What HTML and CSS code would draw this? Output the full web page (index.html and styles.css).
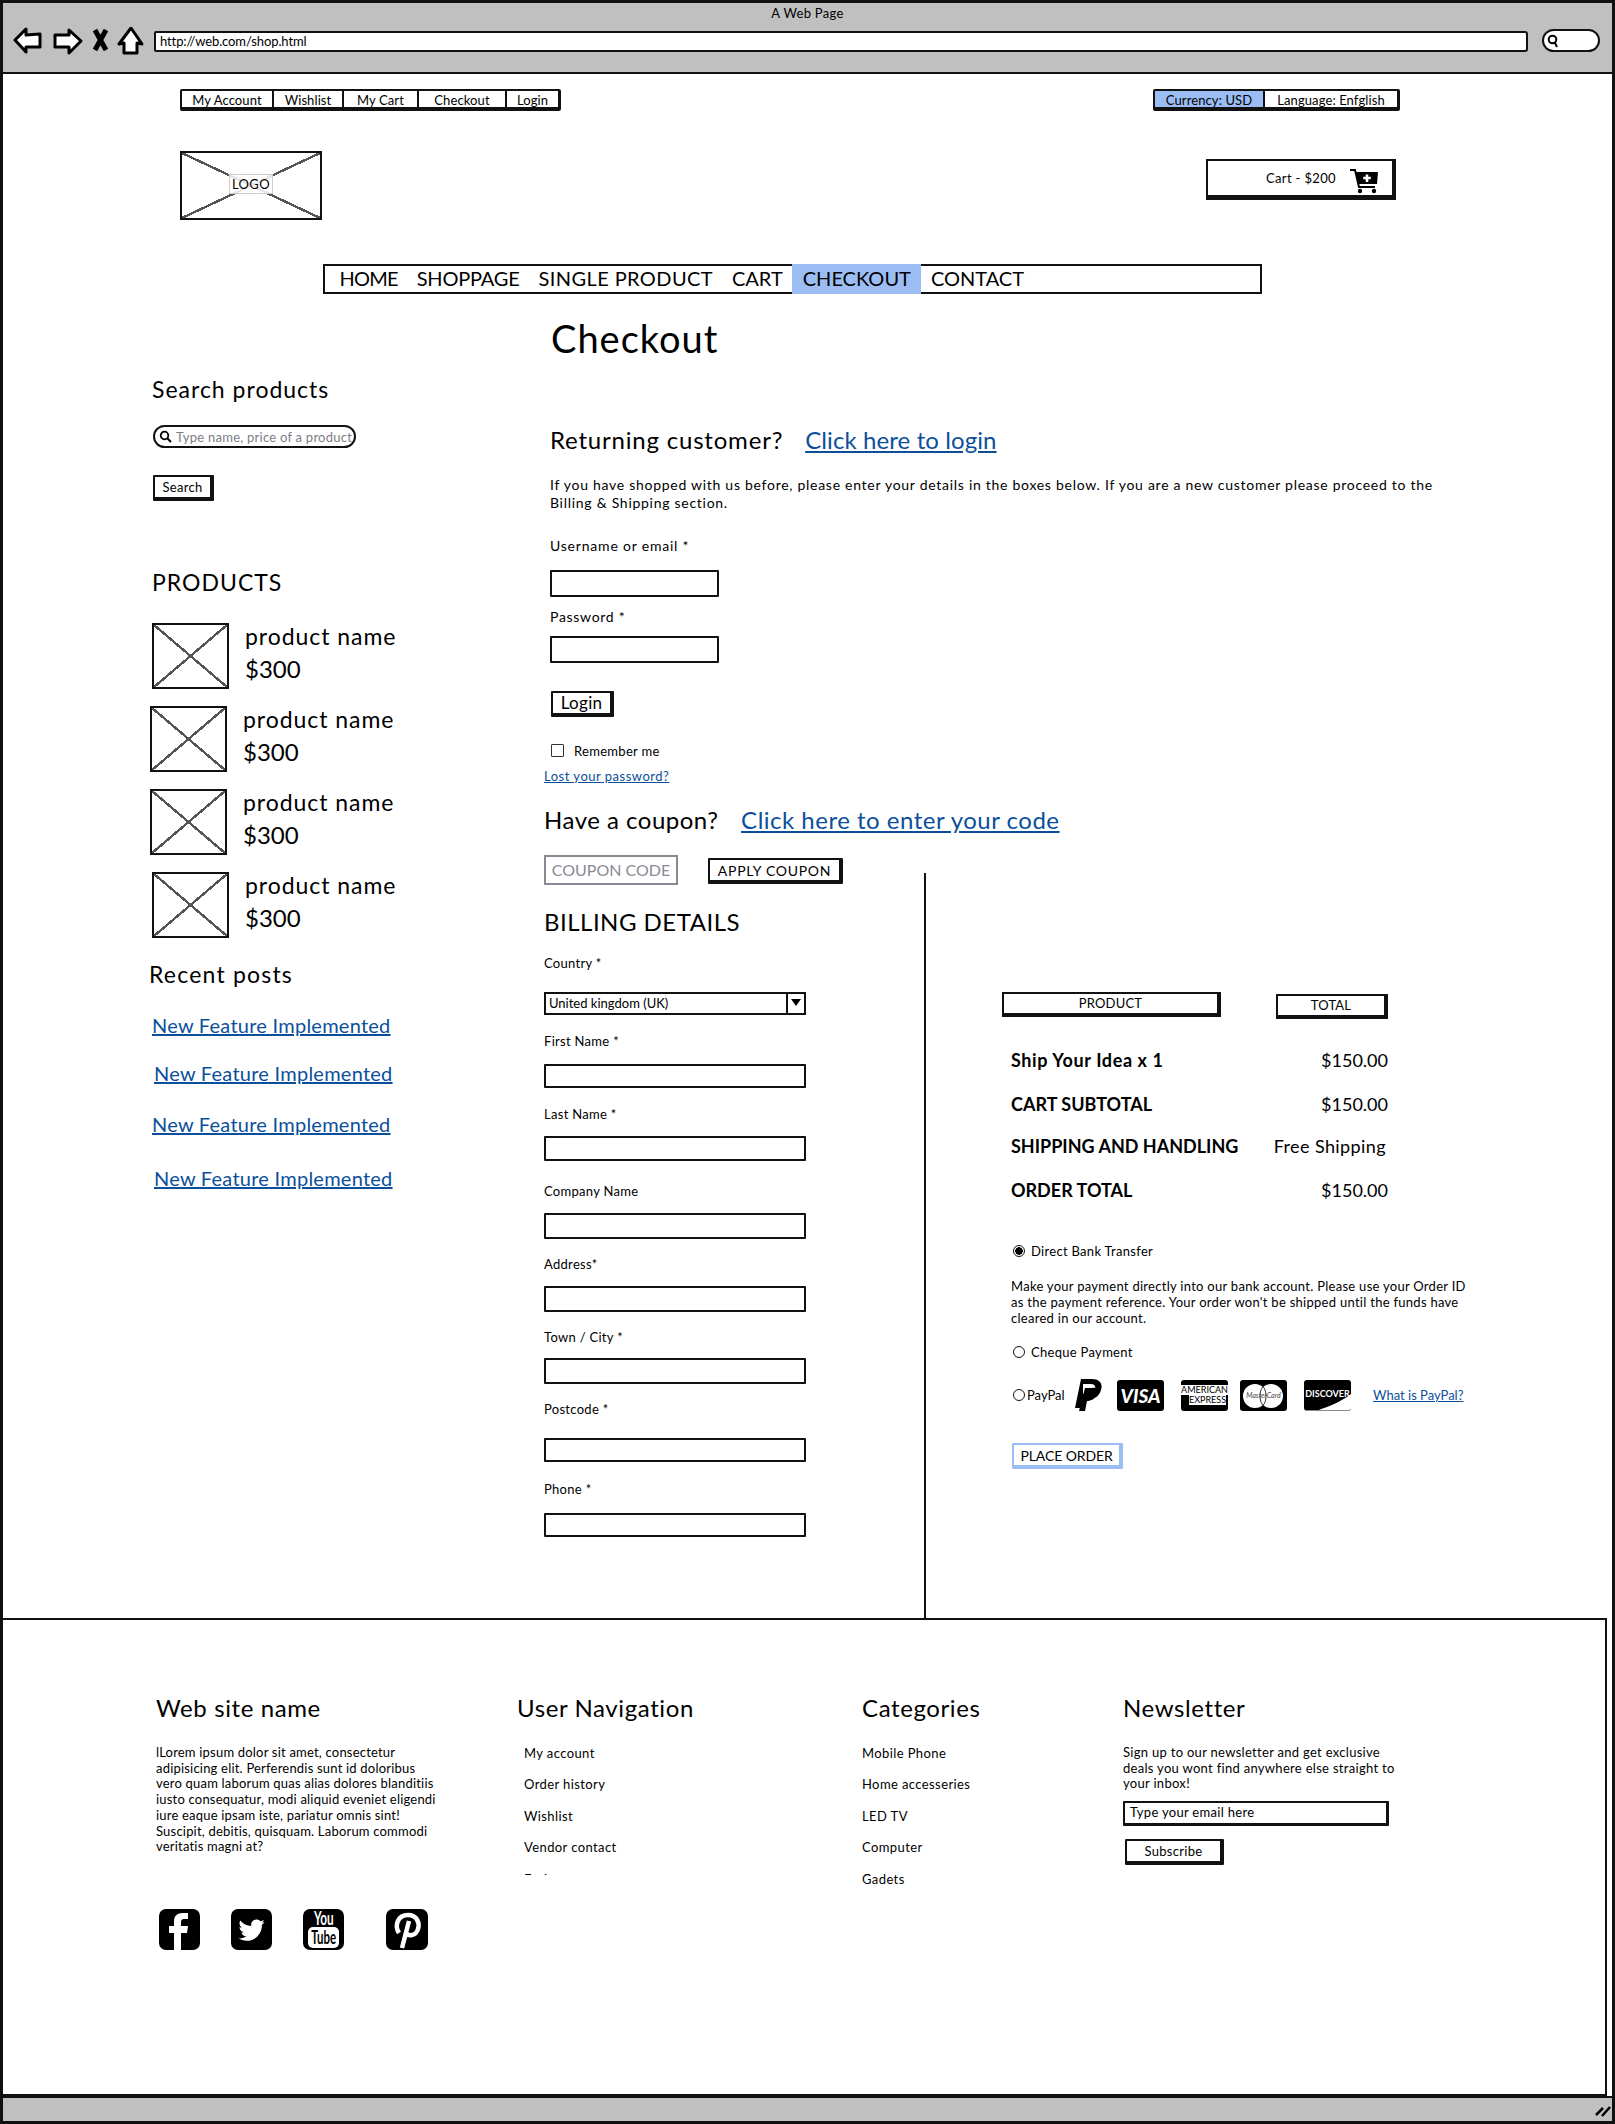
FILE: index.html
```html
<!DOCTYPE html>
<html>
<head>
  <title>A Web Page</title>
  <link rel="stylesheet" href="styles.css">
</head>
<body>
  <div class="window">
    <div class="chrome">
      <div class="chrome-title">A Web Page</div>
      <div class="chrome-row">
        <svg class="chrome-icons" width="132" height="28" viewBox="0 0 132 28">
          <path d="M3 13 L14 2 L14 8 L28 7 L28 20 L14 20 L14 25 Z" fill="#fff" stroke="#000" stroke-width="3" stroke-linejoin="round"/>
          <path d="M69 14 L57 3 L57 8 L43 8 L43 20 L57 20 L57 26 Z" fill="#fff" stroke="#000" stroke-width="3" stroke-linejoin="round"/>
          <path d="M83 3 L94 23 M94 3 L83 23" stroke="#000" stroke-width="5" fill="none"/>
          <path d="M119 1 L107 17 L112 16 L112 26 L125 26 L125 16 L130 17 Z" fill="#fff" stroke="#000" stroke-width="3" stroke-linejoin="round"/>
        </svg>
        <div class="address">http://web.com/shop.html</div>
        <div class="chrome-search">
          <svg width="12" height="14" viewBox="0 0 12 14"><circle cx="5.500" cy="5.500" r="3.800" fill="none" stroke="#000" stroke-width="2"/><path d="M8 9 L10 13" stroke="#000" stroke-width="2"/></svg>
        </div>
      </div>
    </div>

    <div class="topbar">
      <div class="tabs">
        <a class="tab tab-account">My Account</a>
        <a class="tab tab-wishlist">Wishlist</a>
        <a class="tab tab-cart">My Cart</a>
        <a class="tab tab-checkout">Checkout</a>
        <a class="tab tab-login">Login</a>
      </div>
      <div class="tabs">
        <a class="tab tab-currency">Currency: USD</a>
        <a class="tab tab-language">Language: Enfglish</a>
      </div>
    </div>

    <div class="brand-row">
      <div class="placeholder logo"><span class="logo-label">LOGO</span></div>
      <div class="cart-box">
        <span>Cart - $200</span>
        <svg width="30" height="26" viewBox="0 0 30 26">
          <path d="M1 2 L6 2 L10 19 L26 19" fill="none" stroke="#000" stroke-width="2"/>
          <path d="M7 4 L29 4 L28 16 L9 16 Z" fill="#000"/>
          <path d="M18 6.500 V14 M14.200 10 H21.800" stroke="#fff" stroke-width="2.600"/>
          <circle cx="11" cy="23" r="2.200"/><circle cx="25" cy="23" r="2.200"/>
        </svg>
      </div>
    </div>

    <div class="mainnav">
      <a class="nav-item nav-home">HOME</a>
      <a class="nav-item nav-shop">SHOPPAGE</a>
      <a class="nav-item nav-single">SINGLE PRODUCT</a>
      <a class="nav-item">CART</a>
      <a class="nav-item active">CHECKOUT</a>
      <a class="nav-item">CONTACT</a>
    </div>

    <div class="main">
      <aside class="sidebar">
        <h3 class="side-title search-title">Search products</h3>
        <div class="search-pill">
          <svg width="13" height="13" viewBox="0 0 13 13"><circle cx="5.500" cy="5.500" r="3.800" fill="none" stroke="#000" stroke-width="1.800"/><path d="M8.300 8.300 L12 12" stroke="#000" stroke-width="2"/></svg>
          <span>Type name, price of a product</span>
        </div>
        <button class="btn btn-search">Search</button>

        <h3 class="side-title products-title">PRODUCTS</h3>
        <div class="product">
          <div class="placeholder thumb"></div>
          <div><div class="product-name">product name</div><div class="product-price">$300</div></div>
        </div>
        <div class="product shifted">
          <div class="placeholder thumb"></div>
          <div><div class="product-name">product name</div><div class="product-price">$300</div></div>
        </div>
        <div class="product shifted">
          <div class="placeholder thumb"></div>
          <div><div class="product-name">product name</div><div class="product-price">$300</div></div>
        </div>
        <div class="product">
          <div class="placeholder thumb"></div>
          <div><div class="product-name">product name</div><div class="product-price">$300</div></div>
        </div>

        <h3 class="side-title recent-title">Recent posts</h3>
        <a class="post post-1">New Feature Implemented</a>
        <a class="post post-2">New Feature Implemented</a>
        <a class="post post-3">New Feature Implemented</a>
        <a class="post post-4">New Feature Implemented</a>
      </aside>

      <div class="content">
        <h1>Checkout</h1>

        <div class="login-block">
          <h2 class="line-title">Returning customer? <a class="big-link login-link">Click here to login</a></h2>
          <p class="intro">If you have shopped with us before, please enter your details in the boxes below. If you are a new customer please proceed to the Billing &amp; Shipping section.</p>
          <div class="label label-user">Username or email *</div>
          <div class="field field-short input-user"></div>
          <div class="label label-pass">Password *</div>
          <div class="field field-short input-pass"></div>
          <button class="btn btn-login">Login</button>
          <div class="remember"><span class="checkbox"></span>Remember me</div>
        </div>

        <a class="lost">Lost your password?</a>
        <h2 class="line-title coupon-title">Have a coupon? <a class="big-link">Click here to enter your code</a></h2>
        <div class="coupon-row">
          <div class="coupon-box">COUPON CODE</div>
          <button class="btn btn-apply">APPLY COUPON</button>
        </div>

        <div class="checkout-grid">
          <div class="billing">
            <h2 class="billing-title">BILLING DETAILS</h2>
            <div class="label f-country">Country *</div>
            <div class="select"><span>United kingdom (UK)</span><b class="select-arrow"></b></div>
            <div class="label f-first">First Name *</div>
            <div class="field field-wide i-first"></div>
            <div class="label f-last">Last Name *</div>
            <div class="field field-wide i-last"></div>
            <div class="label f-company">Company Name</div>
            <div class="field field-wide i-company"></div>
            <div class="label f-address">Address*</div>
            <div class="field field-wide i-address"></div>
            <div class="label f-town">Town / City *</div>
            <div class="field field-wide i-town"></div>
            <div class="label f-post">Postcode *</div>
            <div class="field field-wide i-post"></div>
            <div class="label f-phone">Phone *</div>
            <div class="field field-wide i-phone"></div>
          </div>

          <div class="order">
            <div class="order-head">
              <div class="head-cell head-product">PRODUCT</div>
              <div class="head-cell head-total">TOTAL</div>
            </div>
            <div class="order-row row-1"><b>Ship Your Idea x 1</b><span>$150.00</span></div>
            <div class="order-row row-2 caps"><b>CART SUBTOTAL</b><span>$150.00</span></div>
            <div class="order-row row-3 caps"><b>SHIPPING AND HANDLING</b><span class="free">Free Shipping</span></div>
            <div class="order-row row-4 caps"><b>ORDER TOTAL</b><span>$150.00</span></div>

            <div class="pay-option pay-bank"><span class="radio on"></span>Direct Bank Transfer</div>
            <p class="pay-note">Make your payment directly into our bank account. Please use your Order ID as the payment reference. Your order won't be shipped until the funds have cleared in our account.</p>
            <div class="pay-option pay-cheque"><span class="radio"></span>Cheque Payment</div>
            <div class="pay-cards">
              <span class="radio"></span><span class="paypal-label">PayPal</span>
              <svg class="pp" width="27" height="32" viewBox="0 0 27 32">
                <path d="M6 0 H17 C25 0 28 5 26 11 C24 18 19 20 13 20 H10 L8 29 H0 Z" fill="#000"/>
                <path d="M8 5 H16 C20 5 21 8 20 11 C19 14 16 15 12 15 H8 Z" fill="#fff"/>
                <path d="M10 9 H17 C23 8 24 11 22 15 C20 20 16 22 12 22 L10 32 H4 Z" fill="#000"/>
              </svg>
              <div class="card visa">VISA</div>
              <div class="card amex"><span>AMERICAN</span><span>EXPRESS</span></div>
              <div class="card mc">
                <svg width="42" height="26" viewBox="0 0 42 26"><circle cx="13" cy="13" r="12" fill="#fff"/><circle cx="29" cy="13" r="12" fill="#fff"/><path d="M21 3.500 C17 8 17 18 21 22.500 C25 18 25 8 21 3.500 Z" fill="#fff" stroke="#000" stroke-width="0.800"/></svg>
                <span>MasterCard</span>
              </div>
              <div class="card discover">
                <svg width="47" height="31" viewBox="0 0 47 31"><path d="M47 14 C34 24 20 28 12 31 H47 Z" fill="#fff"/></svg>
                <span>DISCOVER</span>
              </div>
              <a class="whatis">What is PayPal?</a>
            </div>
            <button class="btn btn-place">PLACE ORDER</button>
          </div>
        </div>
      </div>
    </div>

    <div class="footer">
      <div class="foot-col">
        <h3 class="foot-title">Web site name</h3>
        <p class="foot-text about">lLorem ipsum dolor sit amet, consectetur adipisicing elit. Perferendis sunt id doloribus vero quam laborum quas alias dolores blanditiis iusto consequatur, modi aliquid eveniet eligendi iure eaque ipsam iste, pariatur omnis sint! Suscipit, debitis, quisquam. Laborum commodi veritatis magni at?</p>
        <div class="social">
          <svg width="41" height="41" viewBox="0 0 41 41"><rect width="41" height="41" rx="7"/><path d="M22 41 V24 H28 L29 17 H22 V13 C22 11 23 10 25 10 H29 V4 H24 C18 4 15 7 15 12 V17 H10 V24 H15 V41 Z" fill="#fff"/></svg>
          <svg width="41" height="41" viewBox="0 0 41 41"><rect width="41" height="41" rx="7"/><g transform="translate(5.500 5.500) scale(1.250)"><path fill="#fff" d="M22.460,6C21.690,6.350 20.860,6.580 20,6.690C20.880,6.160 21.560,5.320 21.880,4.310C21.050,4.810 20.130,5.160 19.160,5.360C18.370,4.500 17.260,4 16,4C13.650,4 11.730,5.920 11.730,8.290C11.730,8.630 11.770,8.960 11.840,9.270C8.280,9.090 5.110,7.380 3,4.790C2.630,5.420 2.420,6.160 2.420,6.940C2.420,8.430 3.170,9.750 4.330,10.500C3.620,10.500 2.960,10.300 2.380,10C2.380,10 2.380,10 2.380,10.030C2.380,12.110 3.860,13.850 5.820,14.240C5.460,14.340 5.080,14.390 4.690,14.390C4.420,14.390 4.150,14.360 3.890,14.310C4.430,16 6,17.260 7.890,17.290C6.430,18.450 4.580,19.130 2.560,19.130C2.220,19.130 1.880,19.110 1.540,19.070C3.440,20.290 5.700,21 8.120,21C16,21 20.330,14.460 20.330,8.790C20.330,8.600 20.330,8.420 20.320,8.230C21.160,7.630 21.880,6.870 22.460,6Z"/></g></svg>
          <div class="yt"><span class="yt-you">You</span><span class="yt-box"><span class="yt-tube">Tube</span></span></div>
          <svg width="42" height="41" viewBox="0 0 42 41"><rect width="42" height="41" rx="7"/><path d="M13 24 C8 16 12 6 22 6 C31 6 34 14 32 20 C30 27 22 28 19 23 M23 12 L16 39" fill="none" stroke="#fff" stroke-width="4.500"/></svg>
        </div>
      </div>
      <div class="foot-col">
        <h3 class="foot-title">User Navigation</h3>
        <ul class="foot-list clipped">
          <li>My account</li><li>Order history</li><li>Wishlist</li><li>Vendor contact</li><li>Fruits</li>
        </ul>
      </div>
      <div class="foot-col">
        <h3 class="foot-title">Categories</h3>
        <ul class="foot-list cats">
          <li>Mobile Phone</li><li>Home accesseries</li><li>LED TV</li><li>Computer</li><li>Gadets</li>
        </ul>
      </div>
      <div class="foot-col">
        <h3 class="foot-title">Newsletter</h3>
        <p class="foot-text news">Sign up to our newsletter and get exclusive deals you wont find anywhere else straight to your inbox!</p>
        <div class="field email">Type your email here</div>
        <button class="btn btn-subscribe">Subscribe</button>
      </div>
    </div>

    <div class="statusbar">
      <svg width="16" height="14" viewBox="0 0 16 14"><path d="M1 12 L8 5 M7 13 L15 4" stroke="#000" stroke-width="2.500"/></svg>
    </div>
  </div>
</body>
</html>
```

FILE: styles.css
```css
* { box-sizing: border-box; }
html, body { margin: 0; padding: 0; }
body {
  width: 1615px;
  height: 2124px;
  background: white;
  color: #000;
  font-family: Lato, "Open Sans", sans-serif;
  font-size: 14px;
  overflow: hidden;
}
h1, h2, h3, p, ul { margin: 0; padding: 0; font-weight: normal; }
ul { list-style: none; }
a { color: inherit; }
button { font-family: inherit; color: #000; background: white; padding: 0; cursor: pointer; }

.window {
  width: 1615px;
  height: 2124px;
  border: 3px solid #111;
  display: flex;
  flex-direction: column;
}

/* browser chrome */
.chrome {
  height: 71px;
  flex: none;
  background: #c0c0c0;
  border-bottom: 2px solid #111;
}
.chrome-title {
  text-align: center;
  font-size: 13px;
  line-height: 14px;
  padding-top: 3px;
  letter-spacing: 0.3px;
}
.chrome-row {
  display: flex;
  align-items: flex-start;
  margin-top: 4px;
  padding-left: 9px;
}
.chrome-icons { flex: none; margin-top: 3px; margin-right: 10px; }
.address {
  width: 1374px;
  height: 21px;
  margin-top: 7px;
  background: white;
  border: 2px solid #111;
  border-radius: 2px 3px 3px 2px;
  font-size: 13px;
  line-height: 17px;
  padding-left: 4px;
  letter-spacing: -0.1px;
}
.chrome-search {
  width: 58px;
  height: 23px;
  margin-left: 14px;
  margin-top: 5px;
  background: white;
  border: 2px solid #111;
  border-radius: 12px;
  padding: 3px 0 0 3px;
}

/* top tabs */
.topbar {
  display: flex;
  justify-content: space-between;
  margin-top: 15px;
  padding: 0 212px 0 177px;
}
.tabs {
  display: flex;
  height: 22px;
  border: 2px solid #111;
  border-bottom-width: 4px;
  border-right-width: 3px;
  border-radius: 2px;
}
.tab {
  display: block;
  font-size: 13px;
  line-height: 18px;
  text-align: center;
  border-right: 2px solid #111;
  letter-spacing: 0.1px;
}
.tab:last-child { border-right: none; }
.tab-account { width: 92px; }
.tab-wishlist { width: 70px; }
.tab-cart { width: 75px; }
.tab-checkout { width: 88px; }
.tab-login { width: 51px; }
.tab-currency { width: 110px; background: #9bbdf3; }
.tab-language { width: 132px; }

/* logo row */
.brand-row {
  display: flex;
  justify-content: space-between;
  align-items: flex-start;
  margin-top: 40px;
  padding: 0 216px 0 177px;
}
.placeholder {
  border: 2px solid #111;
  background:
    linear-gradient(to top right, transparent calc(50% - 1.2px), #555 calc(50% - 1.2px), #555 calc(50% + 1.2px), transparent calc(50% + 1.2px)),
    linear-gradient(to bottom right, transparent calc(50% - 1.2px), #555 calc(50% - 1.2px), #555 calc(50% + 1.2px), transparent calc(50% + 1.2px)),
    white;
}
.logo {
  width: 142px;
  height: 69px;
  display: flex;
  align-items: center;
  justify-content: center;
}
.logo-label {
  font-size: 13px;
  line-height: 18px;
  padding: 0 2px;
  margin-bottom: 3px;
  letter-spacing: 0.4px;
  background: rgba(255,255,255,0.85);
  border: 1px solid #ccc;
}
.cart-box {
  width: 190px;
  height: 41px;
  margin-top: 8px;
  border: 2px solid #111;
  border-bottom-width: 5px;
  border-right-width: 4px;
  display: flex;
  justify-content: flex-end;
  font-size: 13px;
  line-height: 16px;
  padding: 9px 13px 0 0;
  letter-spacing: 0.35px;
}
.cart-box svg { margin: -2px 0 0 13px; }

/* main nav */
.mainnav {
  display: flex;
  width: 939px;
  height: 30px;
  margin: 44px 0 0 320px;
  padding-left: 5px;
  border: 2px solid #111;
  font-size: 20px;
  line-height: 25px;
}
.nav-item { display: block; padding: 0 9.500px; }
.nav-home { letter-spacing: -0.8px; }
.nav-shop { letter-spacing: -0.2px; }
.nav-single { letter-spacing: 0.4px; }
.nav-item.active { background: #9bbdf3; height: 30px; margin-top: -2px; padding: 2px 10.500px 0; }

/* layout */
.main {
  display: flex;
  height: 1324px;
  flex: none;
  padding-left: 146px;
}
.sidebar { width: 395px; flex: none; }
.content { width: 1071px; flex: none; }

/* sidebar */
.side-title { font-size: 23px; line-height: 30px; letter-spacing: 1px; }
.search-title { margin: 80px 0 0 3px; }
.search-pill {
  display: flex;
  align-items: center;
  gap: 4px;
  width: 203px;
  height: 23px;
  margin: 21px 0 0 4px;
  padding-left: 4px;
  border: 2px solid #111;
  border-radius: 12px;
  font-size: 13px;
  color: #7d7d86;
  white-space: nowrap;
  letter-spacing: 0.25px;
}
.btn {
  display: block;
  border: 2px solid #111;
  border-bottom-width: 4px;
  border-right-width: 4px;
  border-radius: 1px;
  font-size: 13px;
  letter-spacing: 0.3px;
}
.btn-search { width: 61px; height: 26px; margin: 27px 0 0 4px; }
.products-title { margin: 66px 0 0 3px; }
.product {
  display: flex;
  gap: 16px;
  margin: 17px 0 0 3px;
}
.products-title + .product { margin-top: 26px; }
.product.shifted { margin-left: 1px; }
.thumb { width: 77px; height: 66px; flex: none; }
.product-name { font-size: 23px; line-height: 30px; margin-top: -2px; letter-spacing: 0.95px; }
.product-price { font-size: 24px; line-height: 30px; margin-top: 3px; }
.recent-title { margin: 21px 0 0; letter-spacing: 1.2px; }
.post {
  display: block;
  width: max-content;
  color: #0b4f9c;
  font-size: 20px;
  line-height: 26px;
  letter-spacing: 0.25px;
  text-decoration: underline;
}
.post-1 { margin: 23px 0 0 3px; }
.post-2 { margin: 22px 0 0 5px; }
.post-3 { margin: 25px 0 0 3px; }
.post-4 { margin: 28px 0 0 5px; }

/* login part */
h1 { font-size: 38px; line-height: 46px; margin: 21px 0 0 7px; letter-spacing: 1px; }
.login-block { margin-left: 6px; }
.line-title { font-size: 24px; line-height: 30px; letter-spacing: 0.5px; }
.big-link { color: #0b4f9c; text-decoration: underline; margin-left: 16px; }
.login-block .line-title { margin-top: 64px; letter-spacing: 0.8px; }
.login-link { letter-spacing: 0.1px; margin-left: 15px; }
.intro { width: 900px; line-height: 18px; margin-top: 21px; letter-spacing: 0.72px; }
.label { font-size: 13px; line-height: 18px; letter-spacing: 0.3px; }
.label-user { font-size: 14px; margin-top: 25px; letter-spacing: 0.8px; }
.label-pass { font-size: 14px; margin-top: 11px; letter-spacing: 0.7px; }
.field {
  background: white;
  border: 2px solid #111;
  border-radius: 1px;
}
.field-short { width: 169px; height: 27px; }
.input-user { margin-top: 15px; }
.input-pass { margin-top: 10px; }
.btn-login { width: 63px; height: 26px; margin: 28px 0 0 1px; font-size: 17px; line-height: 18px; }
.remember {
  display: flex;
  align-items: center;
  gap: 10px;
  height: 13px;
  margin-top: 27px;
  font-size: 13px;
  letter-spacing: 0.3px;
}
.checkbox { width: 13px; height: 13px; border: 1.500px solid #333; border-radius: 1px; margin-left: 1px; }
.lost {
  display: block;
  width: max-content;
  margin-top: 10px;
  font-size: 13px;
  line-height: 18px;
  letter-spacing: 0.5px;
  color: #0b4f9c;
  text-decoration: underline;
}
.coupon-title { margin-top: 20px; }
.coupon-row {
  display: flex;
  align-items: flex-start;
  gap: 30px;
  height: 30px;
  margin: 20px 0 -12px;
}
.coupon-box {
  width: 134px;
  height: 30px;
  border: 2px solid #8a8a94;
  color: #8a8a94;
  font-size: 16px;
  line-height: 26px;
  text-align: center;
}
.btn-apply { width: 135px; height: 26px; margin-top: 3px; font-size: 14px; letter-spacing: 0.7px; }

/* billing */
.checkout-grid { display: flex; height: 745px; }
.billing {
  width: 382px;
  flex: none;
  border-right: 2px solid #111;
}
.billing-title { font-size: 24px; line-height: 30px; margin-top: 34px; letter-spacing: 0.5px; }
.select {
  display: flex;
  justify-content: space-between;
  width: 262px;
  height: 23px;
  margin-top: 20px;
  border: 2px solid #111;
  font-size: 13px;
  line-height: 18px;
  padding-left: 3px;
}
.select-arrow {
  position: relative;
  width: 18px;
  border-left: 2px solid #111;
}
.select-arrow::after {
  content: "";
  position: absolute;
  left: 3px;
  top: 5px;
  border: 5px solid transparent;
  border-top: 7px solid #000;
  border-bottom: 0;
}
.field-wide { width: 262px; height: 25px; }
.f-country { margin-top: 17px; }
.f-first { margin-top: 17px; }
.i-first { margin-top: 14px; height: 24px; }
.f-last { margin-top: 17px; }
.i-last { margin-top: 13px; }
.f-company { margin-top: 21px; }
.i-company { margin-top: 13px; height: 26px; }
.f-address { margin-top: 16px; }
.i-address { margin-top: 13px; height: 26px; }
.f-town { margin-top: 16px; }
.i-town { margin-top: 12px; height: 26px; }
.f-post { margin-top: 16px; }
.i-post { margin-top: 20px; height: 24px; }
.f-phone { margin-top: 18px; }
.i-phone { margin-top: 15px; height: 24px; }

/* order */
.order { padding-left: 76px; width: 600px; }
.order-head { display: flex; gap: 55px; align-items: flex-start; margin-top: 119px; }
.head-cell {
  border: 2px solid #111;
  border-bottom-width: 4px;
  border-right-width: 4px;
  font-size: 13px;
  text-align: center;
  line-height: 19px;
  letter-spacing: 0.2px;
}
.head-product { width: 219px; height: 25px; }
.head-total { width: 112px; height: 25px; margin-top: 2px; }
.order-row {
  display: flex;
  justify-content: space-between;
  width: 377px;
  margin-left: 9px;
  font-size: 18px;
  line-height: 30px;
}
.order-row b { letter-spacing: 0.6px; }
.order-row.caps b { letter-spacing: 0; }
.row-1 { margin-top: 26px; }
.row-2 { margin-top: 14px; }
.row-3 { margin-top: 12px; }
.row-4 { margin-top: 14px; }
.free { padding-right: 2px; letter-spacing: 0.4px; }
.radio {
  display: inline-block;
  flex: none;
  width: 12px;
  height: 12px;
  border: 1.500px solid #111;
  border-radius: 50%;
}
.radio.on { background: radial-gradient(circle, #000 3.500px, white 4px); }
.pay-option {
  display: flex;
  align-items: center;
  gap: 6px;
  margin-left: 11px;
  font-size: 13px;
  line-height: 18px;
  letter-spacing: 0.3px;
}
.pay-bank { margin-top: 37px; }
.pay-note { width: 460px; margin: 18px 0 0 9px; font-size: 13px; line-height: 16px; letter-spacing: 0.28px; }
.pay-cheque { margin-top: 17px; }
.pay-cards {
  display: flex;
  align-items: center;
  height: 32px;
  margin: 18px 0 0 11px;
  font-size: 13px;
}
.paypal-label { margin-left: 2px; width: 48px; }
.card {
  position: relative;
  flex: none;
  width: 47px;
  height: 31px;
  margin-left: 17px;
  border-radius: 3px;
  background: #000;
  color: white;
  overflow: hidden;
  display: flex;
  align-items: center;
  justify-content: center;
}
.pp + .card { margin-left: 15px; }
.visa { font-size: 19px; font-weight: 900; font-style: italic; }
.amex { flex-direction: column; font-size: 9px; line-height: 10px; background: #000; }
.amex span { background: white; color: #000; }
.amex span:last-child { margin-left: 6px; }
.mc { margin-left: 12px; }
.mc svg { position: absolute; left: 2px; top: 3px; }
.mc span { position: relative; color: #444; font-size: 7px; font-style: italic; }
.discover { margin-left: 17px; align-items: flex-start; border-bottom: 1px solid #888; }
.discover svg { position: absolute; left: 0; top: 0; }
.discover span { position: relative; font-size: 9px; font-weight: 700; margin-top: 8px; }
.whatis { margin-left: 22px; color: #0b4f9c; text-decoration: underline; }
.btn-place {
  width: 111px;
  height: 26px;
  margin: 32px 0 0 10px;
  border-color: #9bbdf3;
  font-size: 14px;
  letter-spacing: -0.1px;
}

/* footer */
.footer {
  display: grid;
  grid-template-columns: 361px 345px 261px auto;
  width: 1604px;
  height: 478px;
  flex: none;
  padding: 73px 0 0 153px;
  border: 2px solid #111;
  border-left: none;
}
.foot-title { font-size: 24px; line-height: 30px; letter-spacing: 0.6px; }
.foot-text { font-size: 13px; line-height: 15.700px; margin-top: 22px; letter-spacing: 0.2px; }
.about { width: 284px; }
.news { width: 275px; letter-spacing: 0.3px; }
.social { display: flex; gap: 31px; margin: 54px 0 0 3px; }
.social svg:last-child { margin-left: 11px; }
.yt {
  width: 41px;
  height: 41px;
  flex: none;
  background: #000;
  border-radius: 7px;
  color: white;
  display: flex;
  flex-direction: column;
  align-items: center;
}
.yt-you { font-size: 19px; line-height: 18px; font-weight: 700; transform: scaleX(0.62); }
.yt-box { width: 31px; height: 21px; background: white; border-radius: 5px; display: flex; justify-content: center; }
.yt-tube { flex: none; color: #000; font-size: 19px; line-height: 20px; font-weight: 700; transform: scaleX(0.6); }
.foot-list { margin-top: 22px; font-size: 13px; line-height: 16px; letter-spacing: 0.4px; }
.foot-list li { margin-bottom: 15.400px; }
.clipped { margin-left: 7px; height: 130px; overflow: hidden; }
.email {
  width: 266px;
  height: 25px;
  margin-top: 9px;
  font-size: 13px;
  line-height: 18px;
  padding-left: 5px;
  border-bottom-width: 3px;
  border-right-width: 3px;
  letter-spacing: 0.3px;
}
.btn-subscribe { width: 99px; height: 26px; margin: 13px 0 0 2px; }

.statusbar {
  flex: 1;
  background: #c0c0c0;
  border-top: 2px solid #111;
  display: flex;
  justify-content: flex-end;
  align-items: center;
  padding-right: 1px;
}
```
